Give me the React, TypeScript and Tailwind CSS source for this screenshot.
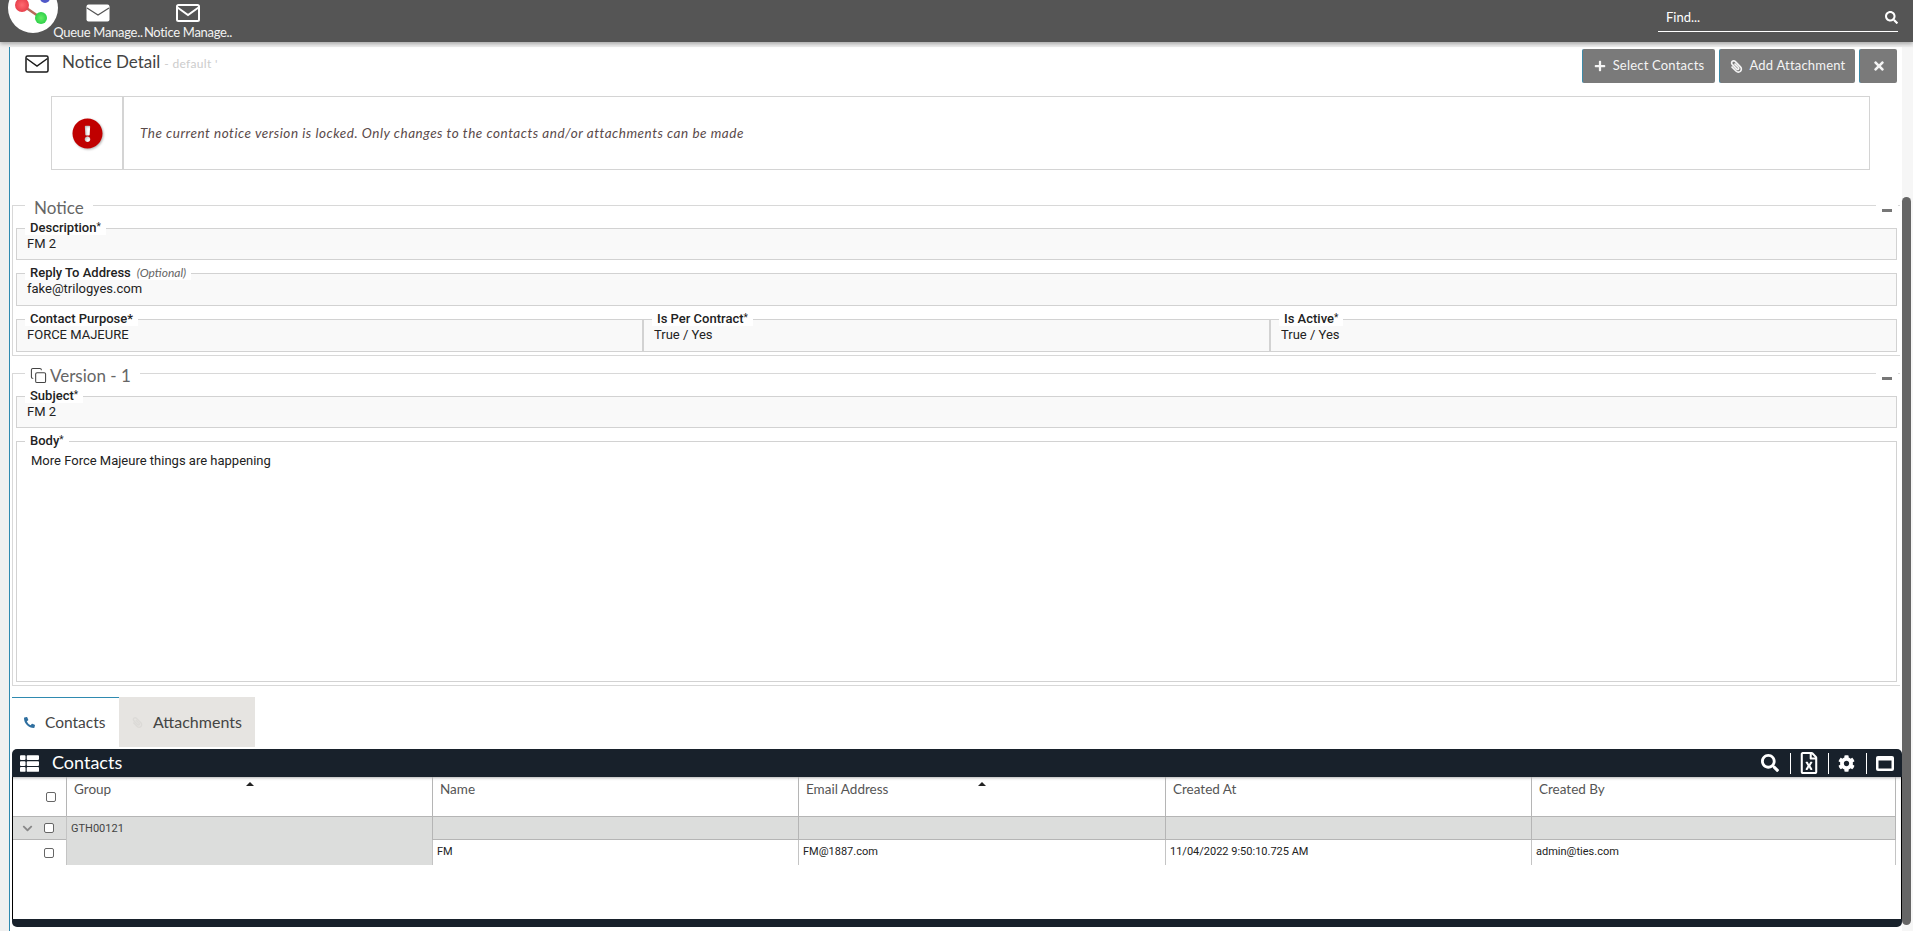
import React from 'react';
import { Copy } from 'lucide-react';
import {
  FaChevronDown,
  FaCog,
  FaExclamationCircle,
  FaPaperclip,
  FaPhoneAlt,
  FaPlus,
  FaRegFileExcel,
  FaSearch,
  FaThList,
  FaTimes,
} from 'react-icons/fa';

const raleway = "font-['Lato','Open_Sans',sans-serif]";
const roboto = "font-['Roboto','Liberation_Sans',sans-serif]";

const SolidEnvelope = () => (
  <svg width="24" height="18" viewBox="0 0 24 18">
    <rect x="0.5" y="0.5" width="23" height="17" rx="2" fill="#fff" />
    <path d="M1 4 L12 11 L23 4" fill="none" stroke="#555" strokeWidth="1.2" />
  </svg>
);

const OutlineEnvelope = ({ color, weight }: { color: string; weight: number }) => (
  <svg width="24" height="18" viewBox="0 0 24 18" fill="none" stroke={color} strokeWidth={weight}>
    <rect x="1" y="1" width="22" height="16" rx="1.5" />
    <path d="M1.5 3.5 L12 11 L22.5 3.5" />
  </svg>
);

const WindowIcon = () => (
  <svg width="18" height="15" viewBox="0 0 18 15">
    <rect x="0" y="0" width="18" height="15" rx="2" fill="#fff" />
    <rect x="2.5" y="4.5" width="13" height="8" fill="#18212b" />
  </svg>
);

const Logo = () => (
  <svg width="52" height="33" viewBox="0 0 52 33" className="shrink-0">
    <defs>
      <radialGradient id="redBall">
        <stop offset="0%" stopColor="#ff6a70" />
        <stop offset="100%" stopColor="#e8404c" />
      </radialGradient>
      <radialGradient id="greenBall">
        <stop offset="0%" stopColor="#66ee66" />
        <stop offset="100%" stopColor="#2fd04a" />
      </radialGradient>
    </defs>
    <circle cx="25" cy="8" r="25" fill="#fff" />
    <line x1="14" y1="5" x2="33" y2="18" stroke="#b86a5a" strokeWidth="2.5" />
    <circle cx="37" cy="-2" r="5" fill="#5058c8" />
    <circle cx="14" cy="5" r="7" fill="url(#redBall)" />
    <circle cx="33" cy="18" r="6" fill="url(#greenBall)" />
  </svg>
);

const NavItem = ({ icon, label }: { icon: React.ReactNode; label: string }) => (
  <div className="flex w-[90px] flex-col items-center pt-[4px]">
    <div className="flex h-[18px] items-center">{icon}</div>
    <span className={`${raleway} mt-[2px] whitespace-nowrap text-[13px] leading-[16px] tracking-[-0.3px] text-[#f2f2f2]`}>{label}</span>
  </div>
);

const Field = ({
  label,
  star,
  note,
  value,
  className = '',
  children,
}: {
  label: string;
  star?: boolean;
  note?: string;
  value?: string;
  className?: string;
  children?: React.ReactNode;
}) => (
  <fieldset className={`min-w-0 border border-[#d2d2d2] bg-[#f9f9f9] px-[10px] ${className}`}>
    <legend className={`${roboto} -ml-[2px] h-[14px] bg-white px-[5px] text-[13px] font-medium leading-[14px] text-[#222]`}>
      {label}
      {star && <span className="relative -top-[2px] text-[10px] font-normal">*</span>}
      {note && <span className={`${raleway} ml-[6px] text-[12px] font-normal italic text-[#666]`}>{note}</span>}
    </legend>
    {value && <div className={`${roboto} pt-[1px] text-[13px] leading-[16px] text-[#222]`}>{value}</div>}
    {children}
  </fieldset>
);

const Section = ({ title, icon, children }: { title: string; icon?: React.ReactNode; children: React.ReactNode }) => (
  <div className="relative mr-[2px]">
    <fieldset className="border border-[#d8d8d8] border-r-0 px-[3px] pb-[3px]">
      <legend className={`${raleway} ml-[9px] flex h-[20px] items-center bg-white px-[9px] pt-[5px] text-[17px] text-[#666]`}>
        {icon}
        {title}
      </legend>
      <div className="flex flex-col gap-[6px] pt-[6px]">{children}</div>
    </fieldset>
    <div className="absolute right-[2px] top-[7px] flex h-[16px] w-[22px] items-center justify-center bg-white">
      <div className="h-[3px] w-[10px] bg-[#777]" />
    </div>
  </div>
);

const ActionButton = ({ icon, label, className = '' }: { icon: React.ReactNode; label?: string; className?: string }) => (
  <button
    type="button"
    className={`${raleway} flex h-[34px] items-center justify-center gap-[7px] rounded-[2px] border-l border-l-[#3c8aa8] bg-[#7a7a7a] text-[13px] tracking-[0.2px] text-[#f4f4f4] ${className}`}
  >
    {icon}
    {label}
  </button>
);

const Checkbox = () => <div className="h-[10px] w-[10px] rounded-[2px] border border-[#666] bg-white" />;

const columns = ['Group', 'Name', 'Email Address', 'Created At', 'Created By'];

const headCell = `${raleway} relative border-l border-[#b5b5b5] pl-[7px] pt-[3px] text-[13.5px] leading-[18px] text-[#555]`;
const bodyCell = `${roboto} border-l border-[#c4c4c4] pl-[4px] pt-[5px] text-[11px] leading-[14px] text-[#222]`;

const ContactsGrid = () => (
  <div className="flex h-[178px] flex-col">
    <div className="flex h-[28px] shrink-0 items-center justify-between rounded-t-[5px] bg-[#18212b] pl-[8px] pr-[8px] text-white">
      <div className="flex items-center gap-[13px]">
        <FaThList size={19} />
        <span className={`${raleway} -mt-[1px] text-[18px]`}>Contacts</span>
      </div>
      <div className="flex items-center">
        <FaSearch size={18} />
        <div className="ml-[11px] mr-[7px] h-[21px] w-px bg-white" />
        <FaRegFileExcel size={22} />
        <div className="ml-[8px] mr-[9px] h-[21px] w-px bg-white" />
        <FaCog size={17} />
        <div className="ml-[11px] mr-[9px] h-[21px] w-px bg-white" />
        <WindowIcon />
      </div>
    </div>
    <div className="flex-1 border-x border-black bg-white shadow-[inset_0_3px_3px_-2px_rgba(0,0,0,0.3)]">
      <div className="grid grid-cols-[53px_366px_366px_367px_366px_365px] grid-rows-[39px_24px_25px]">
        <div className="flex items-center justify-end pr-[10px]">
          <Checkbox />
        </div>
        {columns.map((c) => (
          <div key={c} className={`${headCell} ${c === 'Created By' ? 'border-r' : ''}`}>
            {c}
            {(c === 'Group' || c === 'Email Address') && (
              <div className="absolute left-[179px] top-[5px] h-0 w-0 border-x-[4px] border-b-[4px] border-x-transparent border-b-[#222]" />
            )}
          </div>
        ))}

        <div className="flex items-center justify-end gap-[11px] border-y border-[#b5b5b5] bg-[#dcdddc] pr-[12px]">
          <FaChevronDown size={11} className="text-[#888]" />
          <Checkbox />
        </div>
        <div className={`${bodyCell} row-span-2 border-t border-t-[#b5b5b5] bg-[#dcdddc] text-[#444]`}>GTH00121</div>
        <div className="border-y border-l border-[#b5b5b5] bg-[#dcdddc]" />
        <div className="border-y border-l border-[#b5b5b5] bg-[#dcdddc]" />
        <div className="border-y border-l border-[#b5b5b5] bg-[#dcdddc]" />
        <div className="border border-[#b5b5b5] bg-[#dcdddc]" />

        <div className="flex items-center justify-end pr-[12px]">
          <Checkbox />
        </div>
        <div className={bodyCell}>FM</div>
        <div className={bodyCell}>FM@1887.com</div>
        <div className={bodyCell}>11/04/2022 9:50:10.725 AM</div>
        <div className={`${bodyCell} border-r`}>admin@ties.com</div>
      </div>
    </div>
    <div className="h-[8px] shrink-0 rounded-b-[5px] bg-[#18212b]" />
  </div>
);

export default function App() {
  return (
    <div className="flex h-screen flex-col overflow-hidden bg-[#f0f0f0]">
      <header className="relative z-10 flex h-[42px] shrink-0 bg-[#555] pl-[8px] pr-[15px] shadow-[0_2px_4px_rgba(0,0,0,0.3)]">
        <Logo />
        <div className="-ml-[7px] flex">
          <NavItem icon={<SolidEnvelope />} label="Queue Manage.." />
          <NavItem icon={<OutlineEnvelope color="#fff" weight={2} />} label="Notice Manage.." />
        </div>
        <div className="ml-auto mb-[10px] mt-[4px] flex w-[240px] items-center justify-between border-b border-white pl-[8px]">
          <span className={`${raleway} text-[13px] text-white`}>Find...</span>
          <FaSearch size={13} className="text-white" />
        </div>
      </header>

      <div className="flex min-h-0 flex-1 pt-[5px]">
        <div className="w-[9px] shrink-0" />
        <main className="min-w-0 flex-1 border-l border-[#2f8ab0] bg-white pl-[2px]">
          <div className="flex h-[49px] items-start justify-between pr-[5px] pt-[2px]">
            <div className="flex items-start pl-[13px] pt-[1px]">
              <div className="pt-[5px]">
                <OutlineEnvelope color="#1a1a1a" weight={1.5} />
              </div>
              <span className={`${raleway} ml-[13px] text-[17px] leading-[24px] text-[#444]`}>Notice Detail</span>
              <span className={`${raleway} ml-[4px] mt-[2px] text-[12px] leading-[24px] tracking-[0.3px] text-[#ccc]`}>- default '</span>
            </div>
            <div className="flex gap-[4px]">
              <ActionButton icon={<FaPlus size={12} />} label="Select Contacts" className="w-[133px]" />
              <ActionButton icon={<FaPaperclip size={13} className="-scale-x-100" />} label="Add Attachment" className="w-[136px]" />
              <ActionButton icon={<FaTimes size={14} />} className="w-[38px]" />
            </div>
          </div>

          <div className="ml-[39px] mr-[32px] flex h-[74px] border border-[#d4d4d4]">
            <div className="flex w-[72px] items-center justify-center border-r-2 border-[#d4d4d4]">
              <FaExclamationCircle size={31} className="text-[#c00000] drop-shadow-[1px_1px_1px_rgba(0,0,0,0.3)]" />
            </div>
            <div className={`${raleway} flex items-center pl-[16px] text-[13.5px] italic tracking-[0.52px] text-[#5a4a4a]`}>
              The current notice version is locked. Only changes to the contacts and/or attachments can be made
            </div>
          </div>

          <div className="mt-[25px]">
            <Section title="Notice">
              <Field label="Description" star value="FM 2" className="h-[39px]" />
              <Field label="Reply To Address" note="(Optional)" value="fake@trilogyes.com" className="h-[40px]" />
              <div className="flex">
                <Field label="Contact Purpose*" value="FORCE MAJEURE" className="h-[40px] flex-1" />
                <Field label="Is Per Contract" star value="True / Yes" className="h-[40px] flex-1" />
                <Field label="Is Active" star value="True / Yes" className="h-[40px] flex-1" />
              </div>
            </Section>
          </div>

          <div className="mt-[7px]">
            <Section
              title="Version - 1"
              icon={<Copy size={17} strokeWidth={1.5} className="-ml-[4px] mr-[3px] text-[#444]" />}
            >
              <Field label="Subject" star value="FM 2" className="h-[39px]" />
              <Field label="Body" star className="h-[248px] bg-white">
                <div className={`${roboto} pl-[4px] pt-[5px] text-[13px] leading-[16px] text-[#222]`}>More Force Majeure things are happening</div>
              </Field>
            </Section>
          </div>

          <div className="mt-[11px] flex h-[50px]">
            <div className={`${raleway} flex w-[107px] items-center gap-[10px] border-t border-[#2f8ab0] pl-[12px] text-[15.5px] text-[#444]`}>
              <FaPhoneAlt size={11} className="text-[#2f6f9f]" />
              Contacts
            </div>
            <div className={`${raleway} flex w-[136px] items-center gap-[10px] bg-[#e6e4e1] pl-[13px] text-[16px] text-[#444]`}>
              <FaPaperclip size={11} className="-scale-x-100 text-[#dcdad7]" />
              Attachments
            </div>
          </div>
          <div className="mt-[2px]">
            <ContactsGrid />
          </div>
        </main>
        <div className="w-[11px] shrink-0 bg-[#f6f6f6] pt-[150px]">
          <div className="h-[728px] w-[9px] rounded-full bg-[#666]" />
        </div>
      </div>
    </div>
  );
}
